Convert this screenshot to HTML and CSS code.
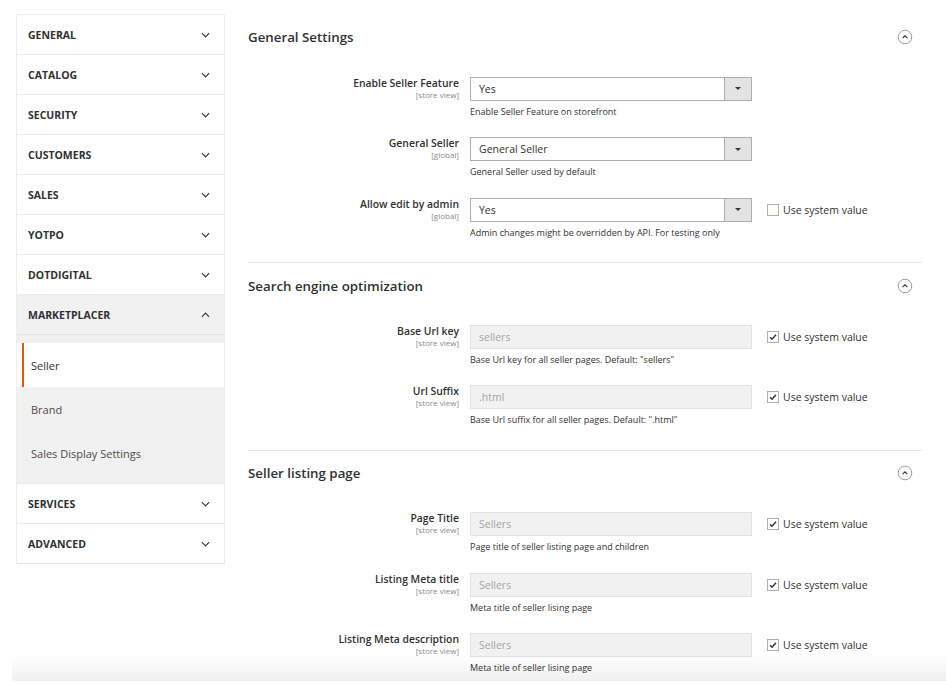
FILE: index.html
```html
<!DOCTYPE html>
<html lang="en">
<head>
<meta charset="utf-8">
<title>Configuration - Marketplacer Seller</title>
<link rel="stylesheet" href="styles.css">
</head>
<body>
<div class="page">
  <nav class="sidebar">
    <div class="nav-item"><span>GENERAL</span><svg class="chev" viewBox="0 0 10 6"><path d="M1 1l4 4 4-4"/></svg></div>
    <div class="nav-item"><span>CATALOG</span><svg class="chev" viewBox="0 0 10 6"><path d="M1 1l4 4 4-4"/></svg></div>
    <div class="nav-item"><span>SECURITY</span><svg class="chev" viewBox="0 0 10 6"><path d="M1 1l4 4 4-4"/></svg></div>
    <div class="nav-item"><span>CUSTOMERS</span><svg class="chev" viewBox="0 0 10 6"><path d="M1 1l4 4 4-4"/></svg></div>
    <div class="nav-item"><span>SALES</span><svg class="chev" viewBox="0 0 10 6"><path d="M1 1l4 4 4-4"/></svg></div>
    <div class="nav-item"><span>YOTPO</span><svg class="chev" viewBox="0 0 10 6"><path d="M1 1l4 4 4-4"/></svg></div>
    <div class="nav-item"><span>DOTDIGITAL</span><svg class="chev" viewBox="0 0 10 6"><path d="M1 1l4 4 4-4"/></svg></div>
    <div class="nav-item open"><span>MARKETPLACER</span><svg class="chev" viewBox="0 0 10 6"><path d="M1 5l4-4 4 4"/></svg></div>
    <ul class="sub">
      <li class="sub-item active">Seller</li>
      <li class="sub-item">Brand</li>
      <li class="sub-item">Sales Display Settings</li>
    </ul>
    <div class="nav-item"><span>SERVICES</span><svg class="chev" viewBox="0 0 10 6"><path d="M1 1l4 4 4-4"/></svg></div>
    <div class="nav-item last"><span>ADVANCED</span><svg class="chev" viewBox="0 0 10 6"><path d="M1 1l4 4 4-4"/></svg></div>
  </nav>

  <main class="content">
    <section class="group first">
      <div class="group-head">
        <h2>General Settings</h2>
        <svg class="collapse" viewBox="0 0 16 16"><circle cx="8" cy="8" r="6.8"/><path d="M5.6 9.2l2.4-2.4 2.4 2.4"/></svg>
      </div>
      <div class="row">
        <div class="label"><span class="lbl">Enable Seller Feature</span><span class="scope">[store view]</span></div>
        <div class="control">
          <div class="select"><span class="val">Yes</span><span class="btn"><i class="tri"></i></span></div>
          <div class="note">Enable Seller Feature on storefront</div>
        </div>
        <div class="sys"></div>
      </div>
      <div class="row">
        <div class="label"><span class="lbl">General Seller</span><span class="scope">[global]</span></div>
        <div class="control">
          <div class="select"><span class="val">General Seller</span><span class="btn"><i class="tri"></i></span></div>
          <div class="note">General Seller used by default</div>
        </div>
        <div class="sys"></div>
      </div>
      <div class="row">
        <div class="label"><span class="lbl">Allow edit by admin</span><span class="scope">[global]</span></div>
        <div class="control">
          <div class="select"><span class="val">Yes</span><span class="btn"><i class="tri"></i></span></div>
          <div class="note">Admin changes might be overridden by API. For testing only</div>
        </div>
        <div class="sys"><span class="cb"></span><span>Use system value</span></div>
      </div>
    </section>

    <section class="group">
      <div class="group-head">
        <h2>Search engine optimization</h2>
        <svg class="collapse" viewBox="0 0 16 16"><circle cx="8" cy="8" r="6.8"/><path d="M5.6 9.2l2.4-2.4 2.4 2.4"/></svg>
      </div>
      <div class="row">
        <div class="label"><span class="lbl">Base Url key</span><span class="scope">[store view]</span></div>
        <div class="control">
          <div class="input disabled">sellers</div>
          <div class="note">Base Url key for all seller pages. Default: "sellers"</div>
        </div>
        <div class="sys"><span class="cb checked"><svg viewBox="0 0 10 10"><path d="M2 5.2l2 2 4-4.4"/></svg></span><span>Use system value</span></div>
      </div>
      <div class="row">
        <div class="label"><span class="lbl">Url Suffix</span><span class="scope">[store view]</span></div>
        <div class="control">
          <div class="input disabled">.html</div>
          <div class="note">Base Url suffix for all seller pages. Default: ".html"</div>
        </div>
        <div class="sys"><span class="cb checked"><svg viewBox="0 0 10 10"><path d="M2 5.2l2 2 4-4.4"/></svg></span><span>Use system value</span></div>
      </div>
    </section>

    <section class="group">
      <div class="group-head">
        <h2>Seller listing page</h2>
        <svg class="collapse" viewBox="0 0 16 16"><circle cx="8" cy="8" r="6.8"/><path d="M5.6 9.2l2.4-2.4 2.4 2.4"/></svg>
      </div>
      <div class="row">
        <div class="label"><span class="lbl">Page Title</span><span class="scope">[store view]</span></div>
        <div class="control">
          <div class="input disabled">Sellers</div>
          <div class="note">Page title of seller listing page and children</div>
        </div>
        <div class="sys"><span class="cb checked"><svg viewBox="0 0 10 10"><path d="M2 5.2l2 2 4-4.4"/></svg></span><span>Use system value</span></div>
      </div>
      <div class="row">
        <div class="label"><span class="lbl">Listing Meta title</span><span class="scope">[store view]</span></div>
        <div class="control">
          <div class="input disabled">Sellers</div>
          <div class="note">Meta title of seller lising page</div>
        </div>
        <div class="sys"><span class="cb checked"><svg viewBox="0 0 10 10"><path d="M2 5.2l2 2 4-4.4"/></svg></span><span>Use system value</span></div>
      </div>
      <div class="row">
        <div class="label"><span class="lbl">Listing Meta description</span><span class="scope">[store view]</span></div>
        <div class="control">
          <div class="input disabled">Sellers</div>
          <div class="note">Meta title of seller lising page</div>
        </div>
        <div class="sys"><span class="cb checked"><svg viewBox="0 0 10 10"><path d="M2 5.2l2 2 4-4.4"/></svg></span><span>Use system value</span></div>
      </div>
    </section>
  </main>
</div>
<div class="footer-fade"></div>
</body>
</html>
```

FILE: styles.css
```css
* { box-sizing: border-box; }
html, body {
  margin: 0;
  padding: 0;
  background: #fff;
  overflow: hidden;
  height: 100%;
}
body {
  font-family: "Open Sans", "Noto Sans", "Liberation Sans", sans-serif;
  color: #303030;
}
.page {
  display: flex;
  align-items: flex-start;
  padding: 14px 24px 0 16px;
  gap: 23px;
}

/* Sidebar */
.sidebar {
  width: 209px;
  flex: none;
  border: 1px solid #ededed;
  border-bottom: none;
  background: #fff;
}
.nav-item {
  height: 40px;
  display: flex;
  align-items: center;
  justify-content: space-between;
  padding: 0 14px 0 11px;
  border-bottom: 1px solid #ebebeb;
  font-size: 10.5px;
  font-weight: 700;
  color: #303030;
}
.nav-item.open {
  background: #f1f1f1;
  border-bottom-color: #e3e3e3;
}
.nav-item.last { border-bottom-color: #e3e3e3; }
.chev {
  width: 9px;
  height: 6px;
  fill: none;
  stroke: #41362f;
  stroke-width: 1.3;
}
.sub {
  list-style: none;
  margin: 0;
  padding: 8px 0 8px;
  background: #f1f1f1;
  border-bottom: 1px solid #ebebeb;
}
.sub-item {
  height: 44px;
  display: flex;
  align-items: center;
  padding-left: 14px;
  font-size: 11px;
  color: #514943;
}
.sub-item.active {
  background: #fff linear-gradient(90deg, transparent 5px, #eb5202 5px, #eb5202 7px, transparent 7px);
  color: #303030;
}

/* Content */
.content {
  flex: 1;
  min-width: 0;
}
.group {
  padding-bottom: 4px;
}
.group + .group {
  border-top: 1px solid #e3e3e3;
}
.group-head {
  height: 46px;
  display: flex;
  align-items: center;
  justify-content: space-between;
  padding-right: 9px;
  margin-bottom: 16.5px;
}
.group + .group .group-head {
  height: 45px;
  margin-bottom: 16.5px;
}
.group-head h2 {
  margin: 0;
  font-size: 13.3px;
  font-weight: 600;
  color: #303030;
}
.collapse {
  width: 16px;
  height: 16px;
  fill: none;
}
.collapse circle {
  stroke: #9b9b9b;
  stroke-width: 1;
}
.collapse path {
  stroke: #41362f;
  stroke-width: 1.1;
}

.row {
  display: grid;
  grid-template-columns: 211px 293px 1fr;
  align-items: start;
  margin-bottom: 20.5px;
}
.label {
  display: flex;
  flex-direction: column;
  align-items: flex-end;
}
.lbl {
  font-size: 10.4px;
  font-weight: 600;
  line-height: 13px;
  color: #303030;
}
.scope {
  font-size: 8px;
  line-height: 10px;
  color: #8a8a8a;
}
.control {
  margin-left: 11px;
  width: 282px;
}
.select, .input {
  height: 24px;
  display: flex;
  align-items: center;
  font-size: 10.5px;
}
.select {
  border: 1px solid #adadad;
  background: #fff;
  color: #303030;
}
.select .val {
  flex: 1;
  padding-left: 8px;
}
.select .btn {
  width: 27px;
  height: 100%;
  background: #e3e3e3;
  border-left: 1px solid #adadad;
  display: flex;
  align-items: center;
  justify-content: center;
}
.tri {
  width: 0;
  height: 0;
  border-left: 3px solid transparent;
  border-right: 3px solid transparent;
  border-top: 3.5px solid #41362f;
}
.input {
  padding-left: 8px;
}
.input.disabled {
  background: #f1f1f1;
  border: 1px solid #e1e1e1;
  color: #a5a5a5;
}
.note {
  margin-top: 5px;
  font-size: 9px;
  line-height: 11px;
  color: #303030;
}
.sys {
  height: 24px;
  display: flex;
  align-items: center;
  gap: 4px;
  margin-left: 15px;
  font-size: 10.5px;
  color: #303030;
}
.cb {
  width: 12px;
  height: 12px;
  border: 1px solid #adadad;
  background: #fff;
  display: flex;
  align-items: center;
  justify-content: center;
}
.cb svg {
  width: 10px;
  height: 10px;
  fill: none;
  stroke: #303030;
  stroke-width: 1.4;
}

.footer-fade {
  position: fixed;
  left: 12px;
  right: 0;
  bottom: 4px;
  height: 26px;
  background: linear-gradient(rgba(0,0,0,0), rgba(0,0,0,0.06));
  pointer-events: none;
}
```
